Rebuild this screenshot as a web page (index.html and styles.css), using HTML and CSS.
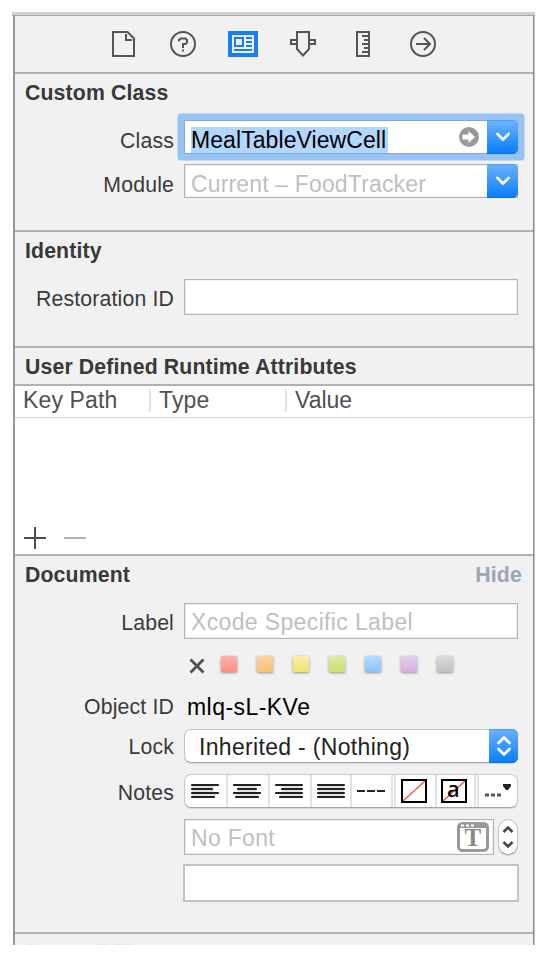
FILE: index.html
```html
<!DOCTYPE html>
<html lang="en">
<head>
<meta charset="utf-8">
<title>Identity Inspector</title>
<link rel="stylesheet" href="styles.css">
</head>
<body>
<div class="frame">
<div class="topbar"></div>
<main class="panel">
  <nav class="tabs">
    <svg class="tab" width="30" height="26" viewBox="0 0 30 26"><path d="M5 1h14.500L26 7.500V25H5z M18 3v6H24"/></svg>
    <svg class="tab" width="30" height="26" viewBox="0 0 30 26"><circle cx="15" cy="13" r="12"/><path d="M11 10.500V9l1.500-1.500h5L19 9v2.500L17.500 13H15v4M15 18.500v2"/></svg>
    <svg class="tab" width="30" height="26" viewBox="0 0 30 26"><path class="blue" d="M0 0h30v26H0z"/><path class="paper" d="M4 4h22v18H4z"/><path class="ink" d="M7 7h8v8H7zM18 7h6M18 11h6M18 15h6M6 19h18"/></svg>
    <svg class="tab" width="30" height="26" viewBox="0 0 30 26"><path d="M9 1h12v17l-6 6.500L9 18zM9 9H3v4h6M21 9h6v4h-6"/></svg>
    <svg class="tab" width="30" height="26" viewBox="0 0 30 26"><path d="M9 1h12v24H9zM14 5h7M16 9h5M14 13h7M16 17h5M14 21h7"/></svg>
    <svg class="tab" width="30" height="26" viewBox="0 0 30 26"><circle cx="15" cy="13" r="12"/><path d="M8 13h13M16 7l6 6-6 6"/></svg>
  </nav>

  <section class="section custom">
    <h2>Custom Class</h2>
    <div class="row class-row">
      <label>Class</label>
      <div class="field combo focused"><span class="selected">MealTableViewCell</span>
        <svg class="go" width="20" height="20" viewBox="0 0 20 20"><circle cx="10" cy="10" r="10"/><path d="M3.500 7.500h6V4l6.500 6-6.500 6v-3.500h-6z"/></svg>
        <span class="drop"><svg width="14" height="10" viewBox="0 0 14 10"><path d="M1.500 2l5.500 5.500L12.500 2"/></svg></span>
      </div>
    </div>
    <div class="row">
      <label>Module</label>
      <div class="field combo"><span class="hint module">Current – FoodTracker</span>
        <span class="drop"><svg width="14" height="10" viewBox="0 0 14 10"><path d="M1.500 2l5.500 5.500L12.500 2"/></svg></span>
      </div>
    </div>
  </section>

  <section class="section identity">
    <h2>Identity</h2>
    <div class="row"><label class="raised">Restoration ID</label><div class="field tall"></div></div>
  </section>

  <section class="section attributes"><h2>User Defined Runtime Attributes</h2></section>

  <section class="table">
    <div class="thead"><span class="th key">Key Path</span><span class="th type">Type</span><span class="th value">Value</span></div>
    <div class="tbody">
      <svg width="64" height="24" viewBox="0 0 64 24"><path class="plus" d="M0 12h22M11 1v22"/><path class="minus" d="M40 12h22"/></svg>
    </div>
  </section>

  <section class="section document">
    <div class="heading"><h2>Document</h2><span class="hide">Hide</span></div>
    <div class="row"><label class="raised">Label</label><div class="field tall"><span class="hint wide">Xcode Specific Label</span></div></div>
    <div class="swatches">
      <svg class="clear" width="16" height="16" viewBox="0 0 16 16"><path d="M1.500 1.500l13 13M14.500 1.500l-13 13"/></svg>
      <i class="sw red"></i><i class="sw orange"></i><i class="sw yellow"></i><i class="sw green"></i><i class="sw azure"></i><i class="sw purple"></i><i class="sw gray"></i>
    </div>
    <div class="row object"><label>Object ID</label><span class="object-id">mlq-sL-KVe</span></div>
    <div class="row lock"><label>Lock</label>
      <div class="popup"><span class="popup-text">Inherited - (Nothing)</span><span class="drop updown"><svg width="14" height="22" viewBox="0 0 14 22"><path d="M1.500 8L7 2.500 12.500 8M1.500 14L7 19.500 12.500 14"/></svg></span></div>
    </div>
    <div class="row notes"><label>Notes</label>
      <div class="segments">
        <span class="seg first"><svg width="30" height="16" viewBox="0 0 30 16"><path class="shade" d="M2 4h22M2 8h22M2 12h24"/><path d="M2 2h26M2 6h20M2 10h26M2 14h22"/></svg></span>
        <span class="seg"><svg width="30" height="16" viewBox="0 0 30 16"><path class="shade" d="M6 4h18M6 8h18M4 12h22"/><path d="M2 2h26M6 6h18M2 10h26M4 14h22"/></svg></span>
        <span class="seg"><svg width="30" height="16" viewBox="0 0 30 16"><path class="shade" d="M8 4h20M8 8h20M6 12h22"/><path d="M2 2h26M8 6h20M2 10h26M6 14h22"/></svg></span>
        <span class="seg justify"><svg width="30" height="16" viewBox="0 0 30 16"><path class="shade" d="M2 4h26M2 8h26M2 12h26"/><path d="M2 2h26M2 6h26M2 10h26M2 14h26"/></svg></span>
        <span class="seg dash"><svg width="30" height="16" viewBox="0 0 30 16"><path d="M1 8h8M11 8h8M21 8h8"/></svg></span>
        <span class="seg box"><svg width="26" height="24" viewBox="0 0 26 24"><path class="red-line" d="M2 22L24 2"/><path d="M1 1h24v22H1z"/></svg></span>
        <span class="seg boxa"><svg width="26" height="24" viewBox="0 0 26 24"><path class="red-line" d="M2 22L24 2"/><path d="M1 1h24v22H1z"/><text x="6" y="18">a</text></svg></span>
        <span class="seg more"><svg width="30" height="20" viewBox="0 0 30 20"><path class="dots" d="M3 14h4M9 14h4M15 14h4"/><path class="tri" d="M21 3h8v2l-3 4h-2l-3-4z"/></svg></span>
      </div>
    </div>
    <div class="row font-row"><label></label>
      <div class="field tall font"><span class="hint nofont">No Font</span>
        <svg width="32" height="30" viewBox="0 0 32 30"><rect x="1.500" y="1.500" width="29" height="27" rx="4"/><path class="cap" d="M1 6V4l3-3h24l3 3v2z"/><path class="lights" d="M4 3.500h3M9 3.500h3M14 3.500h3"/><text x="16" y="24" text-anchor="middle">T</text></svg>
      </div>
      <div class="stepper"><svg width="12" height="24" viewBox="0 0 12 24"><path d="M1.500 7L6 2.500 10.500 7M1.500 17L6 21.500 10.500 17"/></svg></div>
    </div>
    <div class="textarea"></div>
  </section>
  <div class="next"><svg width="120" height="2" viewBox="0 0 120 2"><path d="M14 1.500h5M82 1.500h4M89 1.500h3M101 1.500h4M107 1.500h3M112 1.500h4"/></svg></div>
</main>
</div>
</body>
</html>
```
FILE: styles.css
```css
* { box-sizing: border-box; }
body { margin: 0; background: #fff; font-family: "Liberation Sans", Helvetica, Arial, sans-serif; color: #333; }
svg { display: block; flex: none; fill: none; }
.frame { width: 523px; margin: 12px 0 0 12px; }
.topbar { height: 4px; background: #d0d0d0; border-bottom: 1px solid #a9a9a9; }
.panel { width: 522px; height: 929px; margin-left: 1px; overflow: hidden; background: #f1f1f1; border-left: 2px solid #989898; border-right: 1px solid #bbb; box-shadow: inset -1px 0 #929292; }
.tabs { height: 58px; margin-right: 1px; display: flex; gap: 30px; padding: 15px 0 0 93px; border-bottom: 2px solid #b2b2b2; }
.tab { stroke: #555; stroke-width: 2; }
.tab .blue { fill: #167efb; stroke: none; }
.tab .paper { fill: #f1f1f1; stroke: none; }
.tab .ink { stroke: #167efb; }

.section { margin-right: 1px; border-bottom: 2px solid #b2b2b2; }
h2 { margin: 0; padding: 7px 0 0 10px; height: 36px; font-size: 21.25px; line-height: 24px; letter-spacing: .14px; white-space: nowrap; color: #383838; }
.custom { height: 158px; }
.identity { height: 116px; }
.attributes { height: 38px; }
.row { display: flex; }
label { width: 160px; margin-right: 9px; text-align: right; font-size: 21.25px; line-height: 24px; letter-spacing: .16px; white-space: nowrap; padding: 9px 1px 0 0; color: #3a3a3a; }
label.raised { padding-top: 8px; }
.field { width: 334px; height: 34px; border: 1px solid #b3b3b3; background: #fff; box-shadow: inset 0 0 0 1px #f0f0f0; display: flex; align-items: center; padding-left: 6px; font-size: 23px; letter-spacing: .08px; white-space: nowrap; }
.tall { height: 36px; }
.class-row { margin: 10px 0; }
.focused { border-color: #79a9df; box-shadow: 0 0 0 6.500px #97c4f5; border-radius: 1px; color: #000; }
.selected { background: #b2d7ff; line-height: 26px; margin-top: 5px; padding: 0 2px 0 0; height: 26px; }
.hint { color: #bfbfbf; padding-top: 3px; }
.module { letter-spacing: .15px; padding-top: 6px; }
.wide { letter-spacing: .36px; }
.nofont { letter-spacing: .3px; }
.go { margin-left: auto; margin-right: 8px; }
.go circle { fill: #999; }
.go path { fill: #fff; }
.drop { width: 31px; height: 34px; margin: -1px -1px -1px auto; display: grid; place-items: center; flex: none; border-radius: 0 6px 6px 0; background: linear-gradient(#6cb3fa, #087dff); box-shadow: inset 0 1px #4fa0ef, inset 0 -1px #0870e6; }
.go + .drop { margin-left: 0; }
.drop path { stroke: #fff; stroke-width: 2.800; stroke-linecap: round; stroke-linejoin: round; }
.identity h2 { height: 47px; }

.table { height: 168px; margin-right: 1px; background: #fff; }
.thead { height: 32px; display: flex; border-bottom: 1px solid #d4d4d4; font-size: 23px; letter-spacing: .15px; color: #505050; padding-top: 4px; }
.th { height: 22px; line-height: 21px; }
.key { padding-left: 8px; width: 134px; }
.type { padding-left: 8px; width: 136px; border-left: 2px solid #e1e1e1; }
.value { padding-left: 8px; border-left: 2px solid #e1e1e1; letter-spacing: 0; }
.tbody { height: 136px; display: flex; align-items: flex-end; padding: 0 0 4px 9px; }
.plus { stroke: #4d4d4d; stroke-width: 2; }
.minus { stroke: #b0b0b0; stroke-width: 2; }
.document { border-top: 2px solid #b2b2b2; height: 380px; }

.heading { display: flex; justify-content: space-between; height: 47px; }
.hide { font-size: 21.25px; line-height: 24px; padding: 7px 11px 0 0; font-weight: bold; letter-spacing: .2px; color: #9aa7b5; }
.swatches { display: flex; align-items: center; height: 18px; margin: 16px 0 0 174px; }
.clear { stroke: #505050; stroke-width: 2.800; margin: 3px 15.500px 0 0; }
.sw { width: 16.500px; height: 16.500px; margin: 0 19.500px 0 0; border-radius: 1px; box-shadow: 0 1px 3px rgba(0,0,0,.4); }
.red { background: linear-gradient(#fdb3ac, #fb8f86); }
.orange { background: linear-gradient(#fbd6a0, #f8c270); }
.yellow { background: linear-gradient(#f9f0a5, #f0e270); }
.green { background: linear-gradient(#dceda0, #c9e072); }
.azure { background: linear-gradient(#b9dcff, #89c1fc); }
.purple { background: linear-gradient(#e7cdf0, #d6aee3); }
.gray { background: linear-gradient(#dbdbdb, #c2c2c2); }
.object { height: 34px; margin-top: 13px; }
.object-id { font-size: 23px; line-height: 24px; padding: 9px 0 0 3px; letter-spacing: .45px; color: #000; }
.lock { margin-top: 9px; }
.lock label { padding-top: 6px; }
.popup { width: 334px; height: 34px; border: 1px solid #c5c5c5; border-bottom-color: #a5a5a5; border-radius: 7px; background: #fff; display: flex; align-items: center; font-size: 23px; letter-spacing: .32px; padding-left: 14px; color: #222; box-shadow: 0 1px 1px rgba(0,0,0,.1); }
.popup-text { padding-top: 2px; }
.updown { width: 29px; }
.notes { margin-top: 11px; }
.notes label { padding-top: 7px; }
.segments { width: 334px; height: 34px; border: 1px solid #c9c9c9; border-bottom-color: #a5a5a5; border-radius: 7px; background: #fff; display: flex; box-shadow: 0 1px 1px rgba(0,0,0,.1); }
.seg { width: 42px; flex: none; border-left: 2px solid #e3e3e3; display: flex; align-items: center; justify-content: center; padding-right: 2px; }
.seg path { stroke: #222; stroke-width: 2.200; stroke-linecap: round; }
.seg .shade { stroke: #dfe3e1; stroke-width: 2; stroke-linecap: butt; }
.first { border-left: 0; width: 41px; }
.justify { width: 40px; padding: 0; }
.dash { width: 41px; }
.dash path { stroke-linecap: butt; }
.box { width: 44px; border-left: 5px double #e3e3e3; padding-right: 3px; }
.boxa { width: 39px; padding-right: 3px; }
.box path, .boxa path { stroke: #000; stroke-width: 2; stroke-linecap: butt; }
.boxa svg { overflow: visible; }
.boxa text { font: 500 22px "Noto Sans", sans-serif; fill: #000; }
.seg .red-line { stroke: #f45b4d; stroke-width: 1.500; }
.more { width: 43px; border-left: 5px double #e3e3e3; }
.seg .dots { stroke: #555; stroke-width: 3; stroke-linecap: butt; }
.seg .tri { fill: #222; stroke: none; }
.font-row { margin-top: 11px; }
.font { width: 310px; justify-content: space-between; padding-right: 4px; }
.font rect { stroke: #999; stroke-width: 3; fill: #fff; }
.font .cap { fill: #999; }
.font .lights { stroke: #fff; stroke-width: 2; }
.font text { font: bold 25px "Liberation Serif", serif; fill: #888; }
.stepper { width: 20px; height: 36px; margin-left: 4px; border: 1px solid #c5c5c5; border-bottom-color: #a5a5a5; border-radius: 10px; background: #fff; display: grid; place-items: center; box-shadow: 0 1px 1px rgba(0,0,0,.15); }
.stepper path { stroke: #444; stroke-width: 2.500; }
.textarea { width: 336px; height: 38px; margin: 9px 0 0 168px; border: 2px solid #c3c3c3; background: #fff; }
.next { height: 11px; padding-top: 9px; }
.next path { stroke: #e5e5e5; }
```
